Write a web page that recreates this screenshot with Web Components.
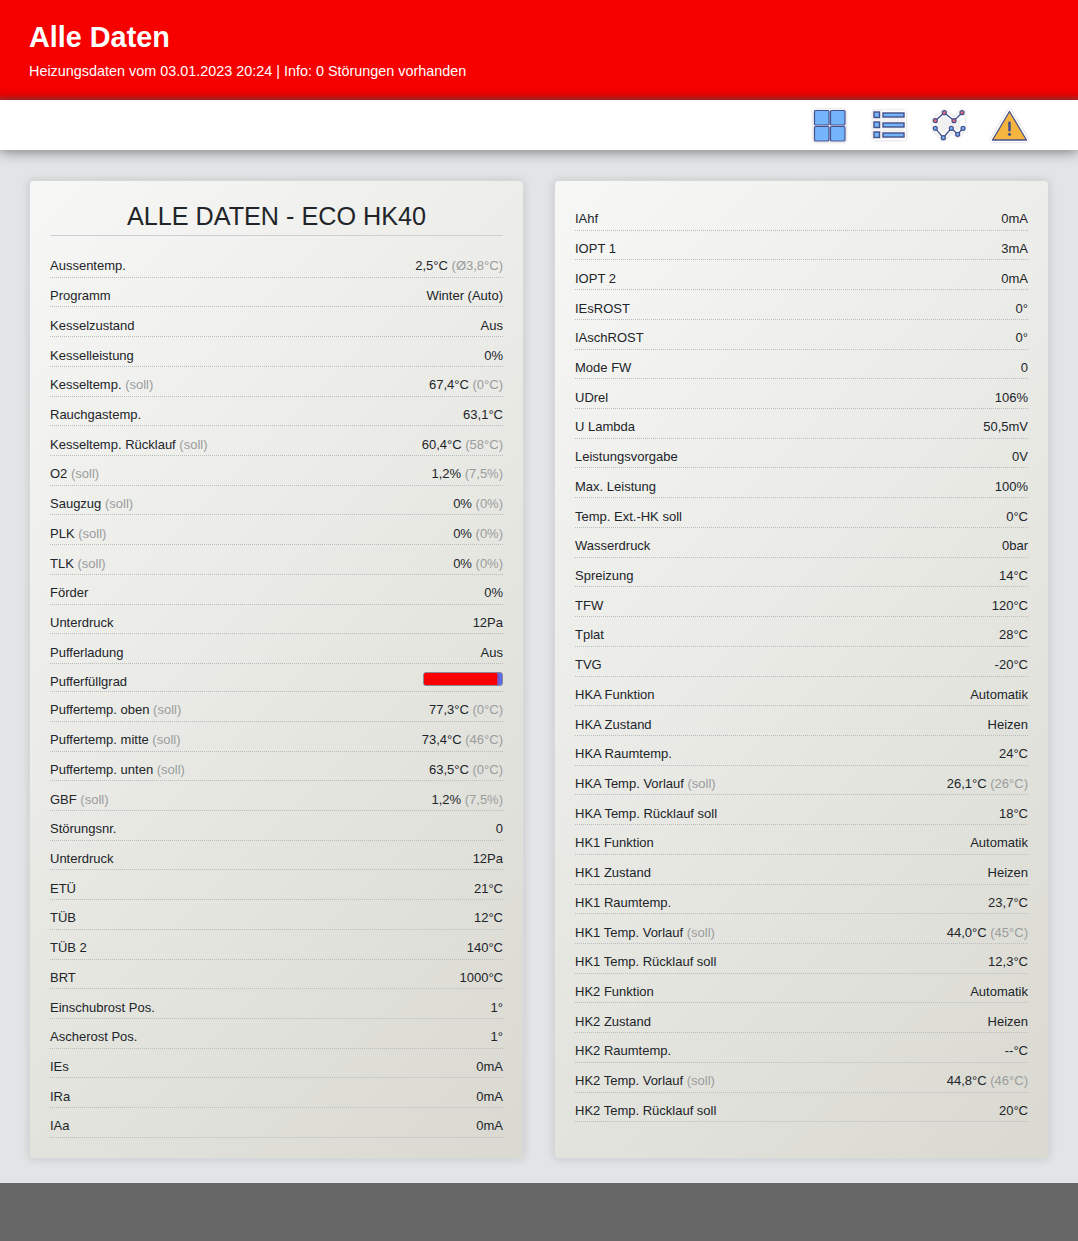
<!DOCTYPE html>
<html lang="de">
<head>
<meta charset="utf-8">
<title>Alle Daten</title>
<style>
html, body { margin: 0; padding: 0; }
body { background: #e2e4e6; font-family: "Liberation Sans", Arial, sans-serif; color: #212529; }
</style>
</head>
<body>
<page-header title="Alle Daten" sub="Heizungsdaten vom 03.01.2023 20:24 | Info: 0 Störungen vorhanden"></page-header>
<tool-bar></tool-bar>
<main-area>
  <data-card heading="ALLE DATEN - ECO HK40" id="left"></data-card>
  <data-card id="right"></data-card>
</main-area>
<page-footer></page-footer>

<script>
class PageHeader extends HTMLElement {
   constructor () {
      super();
      this.attachShadow({ mode: 'open' });
      this.shadowRoot.innerHTML = `
      <style>
      :host { display:block; height:100px; box-sizing:border-box; padding:19px 29px 0; color:#fff;
         background:linear-gradient(to bottom,#f60000 0,#f60000 90px,#ea0505 95px,#b82a2a 100px); }
      h1 { margin:0; font-size:28.8px; line-height:36px; font-weight:700; }
      p { margin:7px 0 0; font-size:14.4px; line-height:18px; }
      </style>
      <h1></h1><p></p>`;
   }
   connectedCallback() {
      this.shadowRoot.querySelector('h1').textContent = this.getAttribute('title');
      this.shadowRoot.querySelector('p').textContent = this.getAttribute('sub');
   }
}

class ToolBar extends HTMLElement {
   constructor () {
      super();
      this.attachShadow({ mode: 'open' });
      const ln = '#46508c';
      this.shadowRoot.innerHTML = `
      <style>
      :host { display:flex; justify-content:flex-end; align-items:center; height:50px; padding-right:49px;
         background:#fff; box-shadow:0 2px 12px rgba(0,0,0,.45); position:relative; }
      svg { width:40px; height:40px; margin-left:20px; display:block; overflow:visible;
         filter:drop-shadow(.8px .8px .8px rgba(0,0,0,.25)) blur(.4px); }
      </style>
      <svg viewBox="0 0 40 40">
         <rect x="5" y="5" width="31.500" height="31.500" rx="2" fill="#eee" stroke="#fff" stroke-width="1.500"/>
         <g fill="#74b4fb" stroke="${ln}" stroke-width="1.200">
         <rect x="5.500" y="5.500" width="14.500" height="14.500" rx="1"/><rect x="21.500" y="5.500" width="14.500" height="14.500" rx="1"/>
         <rect x="5.500" y="21.500" width="14.500" height="14.500" rx="1"/><rect x="21.500" y="21.500" width="14.500" height="14.500" rx="1"/>
         </g>
      </svg>
      <svg viewBox="0 0 40 40">
         <rect x="4.500" y="6" width="32" height="28.500" rx="2" fill="#f2f2f2" stroke="#fff" stroke-width="1.500"/>
         <g fill="#74b4fb" stroke="${ln}" stroke-width="1.400">
         <rect x="5" y="7" width="5.500" height="5.500"/><rect x="5" y="17" width="5.500" height="5.500"/><rect x="5" y="27" width="5.500" height="5.500"/>
         <rect x="14" y="8" width="21" height="4"/><rect x="14" y="18" width="21" height="4"/><rect x="14" y="28" width="21" height="4"/>
         </g>
      </svg>
      <svg viewBox="0 0 40 40">
         <path d="M6.300 15.700 15.300 7.700 25 15.700 33 7.700 34 23.300 28.700 29.300 22.300 23.300 14.300 32.700 6.300 23.300z" fill="#f0f0f0" stroke="#fff" stroke-width="5" stroke-linejoin="round"/>
         <path d="M6.300 15.700 15.300 7.700 25 15.700 33 7.700M6.300 23.300 14.300 32.700 22.300 23.300 28.700 29.300 34 23.300" fill="none" stroke="${ln}" stroke-width="1.300"/>
         <g fill="#ec6a7a" stroke="${ln}" stroke-width="1.200"><circle cx="6.300" cy="15.700" r="2"/><circle cx="15.300" cy="7.700" r="2"/><circle cx="25" cy="15.700" r="2"/><circle cx="33" cy="7.700" r="2"/></g>
         <g fill="#74b4fb" stroke="${ln}" stroke-width="1.200"><circle cx="6.300" cy="23.300" r="2"/><circle cx="14.300" cy="32.700" r="2"/><circle cx="22.300" cy="23.300" r="2"/><circle cx="28.700" cy="29.300" r="2"/><circle cx="34" cy="23.300" r="2"/></g>
      </svg>
      <svg viewBox="0 0 40 40">
         <path d="M20.500 6.500 37.500 35H3.500z" fill="#f4b63f" stroke="#fff" stroke-width="4" stroke-linejoin="round"/>
         <path d="M20.500 6.500 37.500 35H3.500z" fill="#f4b63f" stroke="${ln}" stroke-width="1.300" stroke-linejoin="round"/>
         <rect x="19.200" y="16.500" width="2.600" height="10" rx="1" fill="${ln}"/><circle cx="20.500" cy="29.300" r="1.600" fill="${ln}"/>
      </svg>`;
   }
}

class MainArea extends HTMLElement {
   constructor () {
      super();
      this.attachShadow({ mode: 'open' });
      this.shadowRoot.innerHTML = `
      <style>
      :host { display:grid; grid-template-columns:495px 495px; column-gap:30px; padding:30px 29px 24px; align-items:stretch; }
      </style>
      <slot></slot>`;
   }
}

class DataCard extends HTMLElement {
   constructor () {
      super();
      this.attachShadow({ mode: 'open' });
      this.shadowRoot.innerHTML = `
      <style>
      :host { display:block; box-sizing:border-box; height:979px; padding:20px 20px 0; border:1px solid #d3d8dc; border-radius:4px;
         background:linear-gradient(135deg,#f7f7f6 0,#d9d9d1 100%); box-shadow:0 0 10px rgba(0,0,0,.13); }
      h2 { margin:0 0 12px; font-size:25.2px; font-weight:400; line-height:30px; height:34px; text-align:center; border-bottom:1px solid #ccd0d4; }
      h2:empty { display:none; }
      </style>
      <h2></h2><slot></slot>`;
   }
   connectedCallback() {
      this.shadowRoot.querySelector('h2').textContent = this.getAttribute('heading') || '';
   }
}

class DataRow extends HTMLElement {
   constructor () {
      super();
      this.attachShadow({ mode: 'open' });
      this.shadowRoot.innerHTML = `
      <style>
      :host { display:flex; justify-content:space-between; align-items:center; box-sizing:border-box; height:29.73px; padding-top:7px;
         font-size:13px; border-bottom:1px dotted #b9bcbc; color:#212529; white-space:nowrap; }
      :host(.short) { height:28px; }
      .soll { color:#9a9d9d; }
      </style>
      <span><span id="k"></span><span class="soll" id="ks"></span></span>
      <span><slot><span id="v"></span><span class="soll" id="vs"></span></slot></span>`;
   }
   connectedCallback() {
      const a = n => this.getAttribute(n);
      this.shadowRoot.getElementById('k').textContent = a('k');
      if (a('ks')) this.shadowRoot.getElementById('ks').textContent = ' ' + a('ks');
      this.shadowRoot.getElementById('v').textContent = a('v') || '';
      if (a('vs')) this.shadowRoot.getElementById('vs').textContent = ' ' + a('vs');
   }
}

class FillBar extends HTMLElement {
   constructor () {
      super();
      this.attachShadow({ mode: 'open' });
      this.shadowRoot.innerHTML = `
      <style>
      :host { display:block; box-sizing:border-box; width:80px; height:14px; border-radius:3px; background:#5a6cf0; border:1px solid #8a8a90; overflow:hidden; margin-top:-5px; }
      div { height:100%; width:93%; background:#fa0000; box-shadow:0 0 3px #fa0000; }
      </style>
      <div></div>`;
   }
}

class PageFooter extends HTMLElement {
   constructor () {
      super();
      this.attachShadow({ mode: 'open' });
      this.shadowRoot.innerHTML = `<style>:host { display:block; height:58px; background:#666; }</style>`;
   }
}

customElements.define('page-header', PageHeader);
customElements.define('tool-bar', ToolBar);
customElements.define('main-area', MainArea);
customElements.define('data-card', DataCard);
customElements.define('data-row', DataRow);
customElements.define('fill-bar', FillBar);
customElements.define('page-footer', PageFooter);

const S = '(soll)';
const leftRows = [
   ['Aussentemp.','', '2,5°C','(Ø3,8°C)'],['Programm','', 'Winter (Auto)'],['Kesselzustand','', 'Aus'],['Kesselleistung','', '0%'],
   ['Kesseltemp.',S,'67,4°C','(0°C)'],['Rauchgastemp.','', '63,1°C'],['Kesseltemp. Rücklauf',S,'60,4°C','(58°C)'],['O2',S,'1,2%','(7,5%)'],
   ['Saugzug',S,'0%','(0%)'],['PLK',S,'0%','(0%)'],['TLK',S,'0%','(0%)'],['Förder','', '0%'],['Unterdruck','', '12Pa'],['Pufferladung','', 'Aus'],
   ['Pufferfüllgrad','BAR'],
   ['Puffertemp. oben',S,'77,3°C','(0°C)'],['Puffertemp. mitte',S,'73,4°C','(46°C)'],['Puffertemp. unten',S,'63,5°C','(0°C)'],['GBF',S,'1,2%','(7,5%)'],
   ['Störungsnr.','', '0'],['Unterdruck','', '12Pa'],['ETÜ','', '21°C'],['TÜB','', '12°C'],['TÜB 2','', '140°C'],['BRT','', '1000°C'],
   ['Einschubrost Pos.','', '1°'],['Ascherost Pos.','', '1°'],['IEs','', '0mA'],['IRa','', '0mA'],['IAa','', '0mA']
];
const rightRows = [
   ['IAhf','', '0mA'],['IOPT 1','', '3mA'],['IOPT 2','', '0mA'],['IEsROST','', '0°'],['IAschROST','', '0°'],['Mode FW','', '0'],['UDrel','', '106%'],
   ['U Lambda','', '50,5mV'],['Leistungsvorgabe','', '0V'],['Max. Leistung','', '100%'],['Temp. Ext.-HK soll','', '0°C'],['Wasserdruck','', '0bar'],
   ['Spreizung','', '14°C'],['TFW','', '120°C'],['Tplat','', '28°C'],['TVG','', '-20°C'],['HKA Funktion','', 'Automatik'],['HKA Zustand','', 'Heizen'],
   ['HKA Raumtemp.','', '24°C'],['HKA Temp. Vorlauf',S,'26,1°C','(26°C)'],['HKA Temp. Rücklauf soll','', '18°C'],['HK1 Funktion','', 'Automatik'],
   ['HK1 Zustand','', 'Heizen'],['HK1 Raumtemp.','', '23,7°C'],['HK1 Temp. Vorlauf',S,'44,0°C','(45°C)'],['HK1 Temp. Rücklauf soll','', '12,3°C'],
   ['HK2 Funktion','', 'Automatik'],['HK2 Zustand','', 'Heizen'],['HK2 Raumtemp.','', '--°C'],['HK2 Temp. Vorlauf',S,'44,8°C','(46°C)'],['HK2 Temp. Rücklauf soll','', '20°C']
];

function fill(card, rows) {
   for (const r of rows) {
      const row = document.createElement('data-row');
      row.setAttribute('k', r[0]);
      if (r[1] === 'BAR') {
         row.className = 'short';
         row.appendChild(document.createElement('fill-bar'));
      } else {
         if (r[1]) row.setAttribute('ks', r[1]);
         row.setAttribute('v', r[2]);
         if (r[3]) row.setAttribute('vs', r[3]);
      }
      card.appendChild(row);
   }
}
fill(document.getElementById('left'), leftRows);
fill(document.getElementById('right'), rightRows);
</script>
</body>
</html>
